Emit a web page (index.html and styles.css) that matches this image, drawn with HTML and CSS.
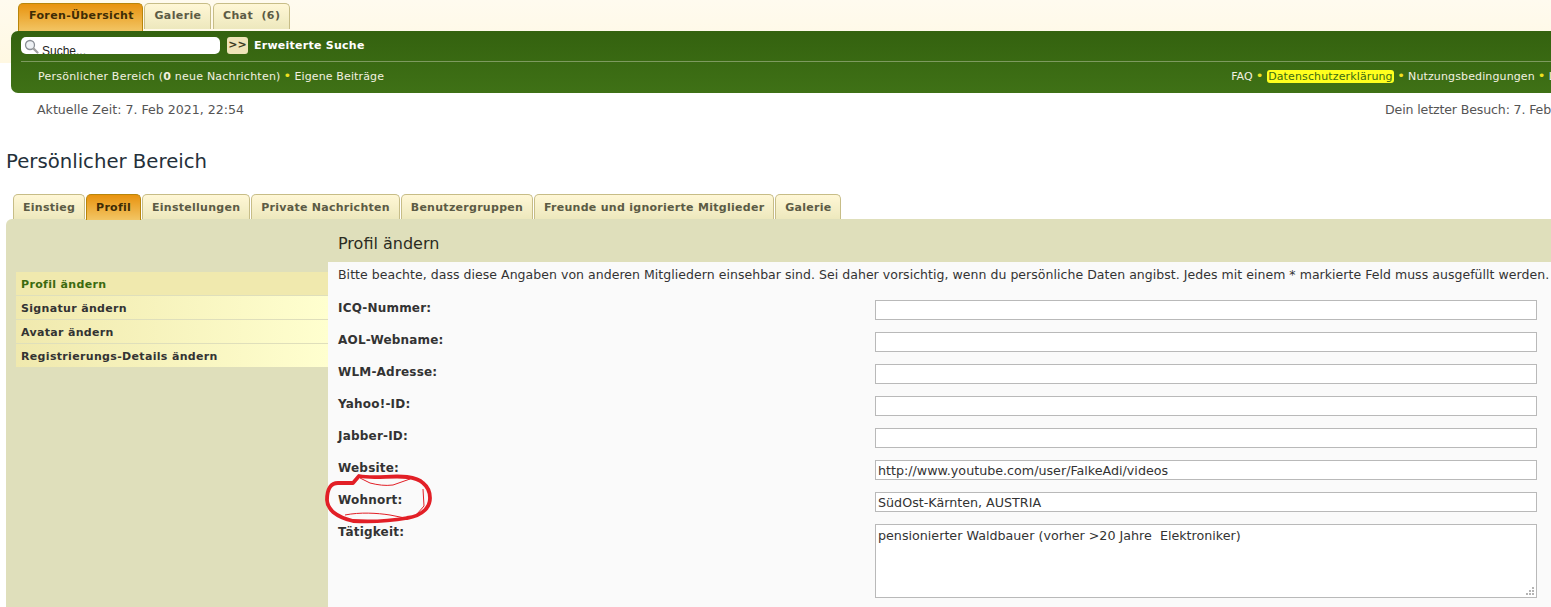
FILE: index.html
```html
<!DOCTYPE html>
<html lang="de">
<head>
<meta charset="utf-8">
<title>Persönlicher Bereich</title>
<link rel="stylesheet" href="styles.css">
</head>
<body>
<div class="page">
  <header class="top">
    <nav class="tabs main-tabs">
      <a class="tab active">Foren-Übersicht</a>
      <a class="tab">Galerie</a>
      <a class="tab">Chat&nbsp; (6)</a>
    </nav>
    <div class="navbar">
      <div class="search-row">
        <div class="search-box">
          <svg class="lens" width="16" height="16" viewBox="0 0 16 16"><circle cx="6" cy="6" r="4.5" fill="#eef1f4" stroke="#8a8f96" stroke-width="1.3"/><path d="M9.6 9.6L13.5 13.5" stroke="#a0a0a0" stroke-width="2.2" stroke-linecap="round"/></svg>
          <span class="search-text">Suche...</span>
        </div>
        <span class="go">&gt;&gt;</span>
        <a class="adv">Erweiterte Suche</a>
      </div>
      <div class="links-row">
        <div class="links-left">
          <a class="wide">Persönlicher Bereich (<b>0</b> neue Nachrichten)</a><i class="dot">•</i><a>Eigene Beiträge</a>
        </div>
        <div class="links-right">
          <a>FAQ</a><i class="dot">•</i><a class="mark">Datenschutzerklärung</a><i class="dot">•</i><a>Nutzungsbedingungen</a><i class="dot">•</i><a>Login</a>
        </div>
      </div>
    </div>
    <div class="times">
      <span>Aktuelle Zeit: 7. Feb 2021, 22:54</span>
      <span class="last-visit">Dein letzter Besuch: 7. Feb</span>
    </div>
  </header>

  <h1 class="title">Persönlicher Bereich</h1>

  <nav class="tabs sub-tabs">
    <a class="tab">Einstieg</a>
    <a class="tab active">Profil</a>
    <a class="tab">Einstellungen</a>
    <a class="tab">Private Nachrichten</a>
    <a class="tab">Benutzergruppen</a>
    <a class="tab">Freunde und ignorierte Mitglieder</a>
    <a class="tab">Galerie</a>
  </nav>

  <section class="panel">
    <aside class="side">
      <a class="side-item current">Profil ändern</a>
      <a class="side-item">Signatur ändern</a>
      <a class="side-item">Avatar ändern</a>
      <a class="side-item">Registrierungs-Details ändern</a>
    </aside>
    <main class="content">
      <h2 class="content-title">Profil ändern</h2>
      <div class="form">
        <p class="note">Bitte beachte, dass diese Angaben von anderen Mitgliedern einsehbar sind. Sei daher vorsichtig, wenn du persönliche Daten angibst. Jedes mit einem * markierte Feld muss ausgefüllt werden.</p>
        <div class="row"><label>ICQ-Nummer:</label><div class="input"></div></div>
        <div class="row"><label>AOL-Webname:</label><div class="input"></div></div>
        <div class="row"><label>WLM-Adresse:</label><div class="input"></div></div>
        <div class="row"><label>Yahoo!-ID:</label><div class="input"></div></div>
        <div class="row"><label>Jabber-ID:</label><div class="input"></div></div>
        <div class="row"><label>Website:</label><div class="input">http://www.youtube.com/user/FalkeAdi/videos</div></div>
        <div class="row"><label>Wohnort:</label><div class="input">SüdOst-Kärnten, AUSTRIA</div></div>
        <div class="row"><label>Tätigkeit:</label>
          <div class="input area">pensionierter Waldbauer (vorher &gt;20 Jahre&nbsp; Elektroniker)
            <svg class="grip" width="8" height="8" viewBox="0 0 8 8"><path fill="#b4b4b4" d="M6 0h2v2H6zM3 3h2v2H3zM6 3h2v2H6zM0 6h2v2H0zM3 6h2v2H3zM6 6h2v2H6z"/></svg>
          </div>
        </div>
      </div>
    </main>
  </section>

  <svg class="scribble" width="108" height="50" viewBox="0 0 108 50">
    <path fill="none" stroke="#e21f26" stroke-width="3.8" stroke-linecap="round" stroke-linejoin="round" d="M34 2C50 5 68 1 82 3C90 4 95 6 98 9C103 13 105 18 105 24C105 30 103 33 100 36C95 41 89 43 82 44C65 47 45 48 28 47C19 45 13 42 8 38C4 34 2 31 2 26C2 20 3 16 5 13C7 10 10 9 13 9L28 9Z"/>
    <path fill="none" stroke="#e21f26" stroke-width="1" d="M20 41C35 38 52 39 65 41L80 44M35 4L45 9C53 11 60 12 68 11L85 5M98 15L99 32L92 40"/>
  </svg>
</div>
</body>
</html>
```
FILE: styles.css
```css
html, body { margin: 0; padding: 0; height: 100%; overflow: hidden; background: #fff; }
body { font-family: "DejaVu Sans", Verdana, sans-serif; font-size: 11px; color: #333; }
.page { position: relative; width: 1700px; height: 607px; overflow: hidden; }

.top { display: flex; flex-direction: column; background: linear-gradient(#fffbef 0, #fff8e2 63px, #fff 63px); }

.tabs { display: flex; }
.tab { display: block; box-sizing: border-box; border: 1px solid #c7bd87; border-bottom: 0; border-radius: 5px 5px 0 0; font-weight: 700; letter-spacing: .28px; color: #5c5b45; background: linear-gradient(#fff7d6, #ede8bd); white-space: nowrap; }
.tab.active { color: #3e2c05; background: linear-gradient(#e8930f, #f2c564); border-color: #b8860b; }

.main-tabs { gap: 1.5px; padding: 3px 0 0 18px; height: 31px; box-sizing: border-box; }
.main-tabs .tab { height: 26px; padding: 5px 9px 0; line-height: 14px; letter-spacing: .38px; }
.main-tabs .tab.active { height: 28px; padding: 5px 8px 0 10px; letter-spacing: .36px; }

.navbar { margin-left: 11px; height: 62px; box-sizing: border-box; background: linear-gradient(#34620f, #3f7116); border-radius: 7px 0 0 7px; padding: 0 10px; color: #f3f1e0; position: relative; }
.search-row { display: flex; align-items: center; height: 30px; border-bottom: 1px solid #7d9a5f; }
.search-box { position: relative; width: 199px; height: 17px; background: #fff; border-radius: 5px; margin-top: -2px; overflow: hidden; }
.lens { position: absolute; left: 3px; top: 2px; }
.search-text { position: absolute; left: 21px; top: 7px; font-family: "Liberation Sans", Arial, sans-serif; font-size: 12px; line-height: 14px; color: #222; }
.go { margin: -2px 6px 0 7px; width: 21px; height: 17px; border-radius: 3px; background: #efe4b8; color: #3b3a22; font-weight: 700; font-size: 11px; line-height: 16px; text-align: center; }
.adv { font-weight: 700; color: #fff; margin-top: -2px; letter-spacing: .25px; }
.links-row { display: flex; justify-content: space-between; padding: 6px 0 0 17px; line-height: 17px; letter-spacing: .13px; }
.links-right { margin-right: 111px; }
.wide { letter-spacing: .23px; }
.dot { font-style: normal; font-size: 13px; line-height: 13px; color: #f0e020; margin: 0 3px; }
.mark { background: #ffff1e; color: #3b6b12; border-radius: 3px; padding: 0 1.5px; }

.times { display: flex; justify-content: space-between; padding: 8px 0 0 37px; height: 17px; font-size: 12.6px; line-height: 17px; color: #555; }
.last-visit { margin-right: 149px; letter-spacing: -.15px; }

.title { margin: 0; padding: 30px 0 0 6px; height: 28px; font-size: 19.7px; font-weight: 400; line-height: 28px; color: #24303a; }

.sub-tabs { gap: .8px; padding: 18px 0 0 13px; height: 25px; }
.sub-tabs .tab { height: 25px; padding: 6px 9px 0; line-height: 14px; }
.sub-tabs .tab.active { height: 26px; }

.panel { display: flex; margin-left: 6px; height: 400px; background: #dfdfbb; border-radius: 6px 0 0 0; }
.side { width: 312px; padding: 53px 0 0 10px; }
.side-item { display: block; height: 23px; margin-bottom: 1px; padding-left: 5px; line-height: 25px; font-weight: 700; letter-spacing: .33px; color: #333; background: linear-gradient(90deg, #f0e9ae, #ffffcf); }
.side-item.current { color: #3a6a10; background: #f0e9ae; }

.content { flex: 1; display: flex; flex-direction: column; }
.content-title { margin: 0; height: 43px; padding-left: 10px; font-size: 16px; font-weight: 400; line-height: 49px; color: #2b2b22; }
.form { flex: 1; background: #fafafa; padding: 0 0 0 10px; }
.note { margin: 0; height: 38px; font-size: 12.5px; line-height: 26px; color: #333; letter-spacing: .04px; white-space: nowrap; }
.row { display: flex; min-height: 32px; }
.row label { width: 537px; font-size: 12px; font-weight: 700; line-height: 16px; color: #333; letter-spacing: .2px; }
.input { position: relative; box-sizing: border-box; width: 662px; height: 20px; background: #fff; border: 1px solid #b9b9b9; padding: 1px 0 0 2px; font-size: 12.7px; line-height: 18px; color: #333; }
.input.area { height: 74px; line-height: 19px; }
.grip { position: absolute; right: 2px; bottom: 2px; }

.scribble { position: absolute; left: 325px; top: 474px; }
```
